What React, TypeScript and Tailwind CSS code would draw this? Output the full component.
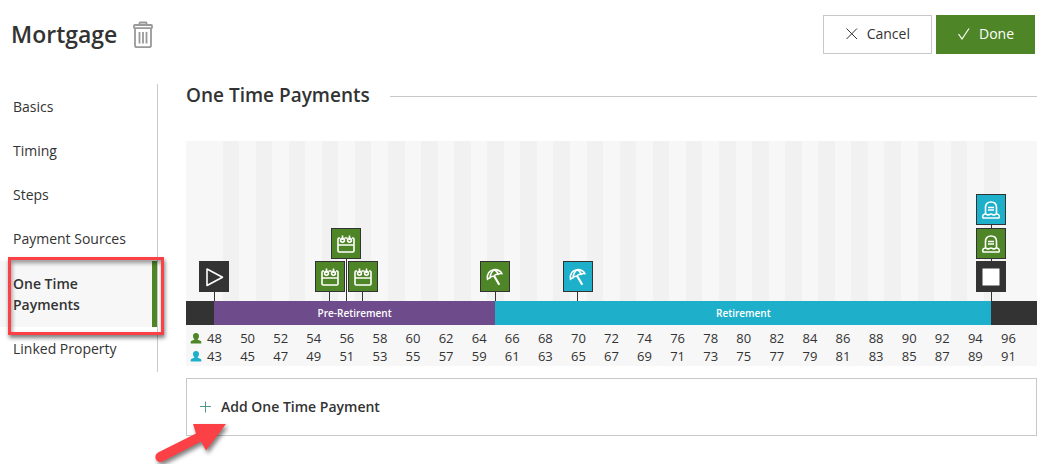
import { ReactNode } from "react";

const FIRST_AGE = 48;
const LAST_AGE = 96;
const AGE_GAP = 5;

const years = Array.from({ length: LAST_AGE - FIRST_AGE + 1 }, (_, i) => FIRST_AGE + i);
const labels = years.filter((year) => year % 2 === 0);

type IconName = "play" | "stop" | "calendar" | "umbrella" | "tombstone";

type Marker = {
  age: number;
  level: number;
  icon: IconName;
  color: string;
};

const markers: Marker[] = [
  { age: 48, level: 0, icon: "play", color: "bg-[#333333]" },
  { age: 56, level: 1, icon: "calendar", color: "bg-[#4e8526]" },
  { age: 55, level: 0, icon: "calendar", color: "bg-[#4e8526]" },
  { age: 57, level: 0, icon: "calendar", color: "bg-[#4e8526]" },
  { age: 65, level: 0, icon: "umbrella", color: "bg-[#4e8526]" },
  { age: 70, level: 0, icon: "umbrella", color: "bg-[#1eafca]" },
  { age: 95, level: 2, icon: "tombstone", color: "bg-[#1eafca]" },
  { age: 95, level: 1, icon: "tombstone", color: "bg-[#4e8526]" },
  { age: 95, level: 0, icon: "stop", color: "bg-[#333333]" },
];

const stems = ["h-[9px]", "h-[42px]", "h-[76px]"];

const navItems = ["Basics", "Timing", "Steps", "Payment Sources", "One Time Payments", "Linked Property"];

const shapes: Record<IconName, ReactNode> = {
  play: <path d="M3 2v16.500L18.500 10.200z" />,
  stop: <path d="M1.500 1.500h17v17h-17z" fill="currentColor" stroke="none" />,
  calendar: (
    <>
      <path d="M4 4H3Q2 4 2 5.200v11.600Q2 18 3.200 18h13.600q1.200 0 1.200-1.200V5.200Q18 4 17 4h-1M8.500 4h3M2 11h16" />
      <circle cx="6.500" cy="6.300" r="1.900" />
      <circle cx="13.500" cy="6.300" r="1.900" />
      <path d="M6.500 1.500V6M13.500 1.500V6" />
    </>
  ),
  umbrella: (
    <>
      <path d="M2.500 12.500C1.500 7 4.500 3 9 2.700c3.500-.3 6.500 1.300 8 4.100-1.600-.6-3-.3-4 .6-1.700-.5-3.200.1-4.200 1.900-2-.2-3.100.3-3.800 1.700-1.200 0-2 .5-2.500 1.500z" />
      <path d="M5 10.800C5.300 7 6.800 4.300 9 2.800c2 .7 3.500 2.300 4.100 4.500" />
      <path d="M9.300 9.300l5 8.500" strokeWidth="2.200" />
    </>
  ),
  tombstone: (
    <>
      <path d="M4.500 14V7.500C4.500 4 6.700 2 10 2s5.500 2 5.500 5.500V14" />
      <path d="M7 7.500h6M7 10h6" />
      <path d="M2 18c-1-2.200.3-4 2.500-4 1.200 0 1.500.9 2.700.9S8.800 14 10 14s1.600.9 2.800.9 1.500-.9 2.700-.9c2.200 0 3.500 1.800 2.500 4z" />
    </>
  ),
};

const MarkerIcon = ({ name }: { name: IconName }) => (
  <svg
    viewBox="0 0 20 20"
    className="size-5 text-white"
    fill="none"
    stroke="currentColor"
    strokeWidth="1.600"
    strokeLinejoin="round"
  >
    {shapes[name]}
  </svg>
);

const TrashIcon = () => (
  <svg viewBox="0 0 20 28" className="h-7 w-5" fill="none" stroke="#999999" strokeWidth="1.800">
    <path d="M6.500 4V2q0-.5.500-.5h6q.5 0 .5.500v2" />
    <rect x="1" y="4" width="18" height="3.200" rx=".8" />
    <path d="M2 7.500v16.700q0 2 2 2h12q2 0 2-2V7.500" />
    <path d="M6.500 11v11.500M10 11v11.500M13.500 11v11.500" />
  </svg>
);

const PersonIcon = ({ className }: { className: string }) => (
  <svg viewBox="0 0 12 12" className={className} fill="currentColor">
    <path d="M6 0c2.100 0 3.200 1.400 3 3.200-.1 1.400-.7 2.300-1.300 2.900v.7l2.700 1c.6.200.9.600.9 1.200v1.500H.700V9c0-.6.300-1 .9-1.200l2.700-1v-.7C3.700 5.500 3.100 4.600 3 3.200 2.800 1.400 3.900 0 6 0z" />
  </svg>
);

const AgeRow = ({ offset, color }: { offset: number; color: string }) => (
  <div className="flex h-[18px] items-center pl-1 pr-3">
    <PersonIcon className={`-mr-1 size-3 shrink-0 ${color}`} />
    {labels.map((age) => (
      <span key={age} className="w-0 grow text-center">
        {age - offset}
      </span>
    ))}
  </div>
);

const Timeline = () => (
  <div className="relative mt-[33px] bg-[#f7f7f7] text-[13px]">
    <div className="flex h-40 px-5">
      {years.map((year) => (
        <div key={year} className={`grow ${year % 2 ? "bg-[#f1f1f1]" : ""}`} />
      ))}
    </div>
    <div className="flex h-6 bg-[#333333] pr-[29px] pl-7 text-center text-[10px] leading-6 font-semibold text-white">
      <div className="w-0 grow-17 bg-[#6e4b8b]">Pre-Retirement</div>
      <div className="w-0 grow-30 bg-[#1eafca]">Retirement</div>
      <div className="w-0 grow" />
    </div>
    <div className="pt-[5px]">
      <AgeRow offset={0} color="text-[#4e8526]" />
      <AgeRow offset={AGE_GAP} color="text-[#1eafca]" />
    </div>
    <div className="absolute top-0 right-[29px] left-7 h-40">
      {markers.map((marker) => (
        <div
          key={`${marker.age}-${marker.level}`}
          className="absolute bottom-0 flex -translate-x-1/2 flex-col items-center"
          style={{ left: `${((marker.age - FIRST_AGE) / (LAST_AGE - FIRST_AGE)) * 100}%` }}
        >
          <div className={`flex h-[31px] w-[30px] items-center justify-center border border-[#333333] ${marker.color}`}>
            <MarkerIcon name={marker.icon} />
          </div>
          <div className={`w-px bg-[#333333] ${stems[marker.level]}`} />
        </div>
      ))}
    </div>
  </div>
);

const SideNav = () => (
  <nav className="w-[158px] shrink-0 self-start border-r border-[#c8c8c8] py-px text-sm leading-[21px]">
    {navItems.map((item) =>
      item === "One Time Payments" ? (
        <div key={item} className="relative">
          <a href="#" className="block border-r-5 border-[#4e8526] bg-[#f7f7f7] py-3 pr-10 pl-[13px] font-semibold">
            {item}
          </a>
          <div className="pointer-events-none absolute -top-1 -right-[7px] -bottom-2 left-2 border-3 border-[#fb4145] shadow-[1px_3px_4px_rgba(0,0,0,0.5),inset_1px_3px_4px_rgba(0,0,0,0.4)]" />
        </div>
      ) : (
        <a key={item} href="#" className="block pt-[11px] pb-3 pl-[13px]">
          {item}
        </a>
      )
    )}
  </nav>
);

const Arrow = () => (
  <svg viewBox="0 0 84 44" className="pointer-events-none absolute top-[42px] -left-9 h-11 w-[84px]">
    <path
      d="M76 4L56 30.500l-5-9L12.500 41.500c-6 2.500-10-5.500-4.500-9L46 13.500 43 4z"
      fill="#fb4145"
      className="drop-shadow-[2px_3px_2px_rgba(0,0,0,0.5)]"
    />
  </svg>
);

const App = () => {
  return (
    <div className="min-h-screen overflow-hidden bg-white font-['Open_Sans','Noto_Sans',sans-serif] text-[#333333]">
      <header className="flex items-center pt-[15px] pr-6 pl-[11px]">
        <h1 className="pb-0.5 text-[23px] leading-8 font-semibold">Mortgage</h1>
        <button type="button" aria-label="Delete" className="ml-4">
          <TrashIcon />
        </button>
        <div className="ml-auto flex gap-1 text-sm">
          <button type="button" className="flex h-[39px] items-center gap-2 border border-[#c8c8c8] px-[21px] pb-0.5">
            <svg viewBox="0 0 14 14" className="size-[14px]" fill="none" stroke="currentColor">
              <path d="M1.500 1.500l10.500 10.500M12 1.500l-10.500 10.500" />
            </svg>
            Cancel
          </button>
          <button type="button" className="flex h-[39px] items-center gap-2 bg-[#4e8526] px-[21px] pb-0.5 text-white">
            <svg viewBox="0 0 14 14" className="size-[14px]" fill="none" stroke="currentColor" strokeWidth="1.200">
              <path d="M1.500 7l3.500 5L12 1.500" />
            </svg>
            Done
          </button>
        </div>
      </header>
      <div className="mt-[30px] flex gap-7">
        <SideNav />
        <main className="min-w-0 grow pr-[22px]">
          <div className="flex items-center gap-5">
            <h2 className="pb-0.5 text-[19px] leading-[22px] font-semibold">One Time Payments</h2>
            <div className="h-px grow bg-[#c8c8c8]" />
          </div>
          <Timeline />
          <div className="relative mt-3">
            <button
              type="button"
              className="flex h-[58px] w-full items-center gap-2 border border-[#c8c8c8] px-3 text-sm font-semibold"
            >
              <svg viewBox="0 0 14 14" className="size-[14px]" fill="none" stroke="#4b9a8c">
                <path d="M6.500 1.500v11M1 6.500h11" />
              </svg>
              Add One Time Payment
            </button>
            <Arrow />
          </div>
        </main>
      </div>
    </div>
  );
};

export default App;
